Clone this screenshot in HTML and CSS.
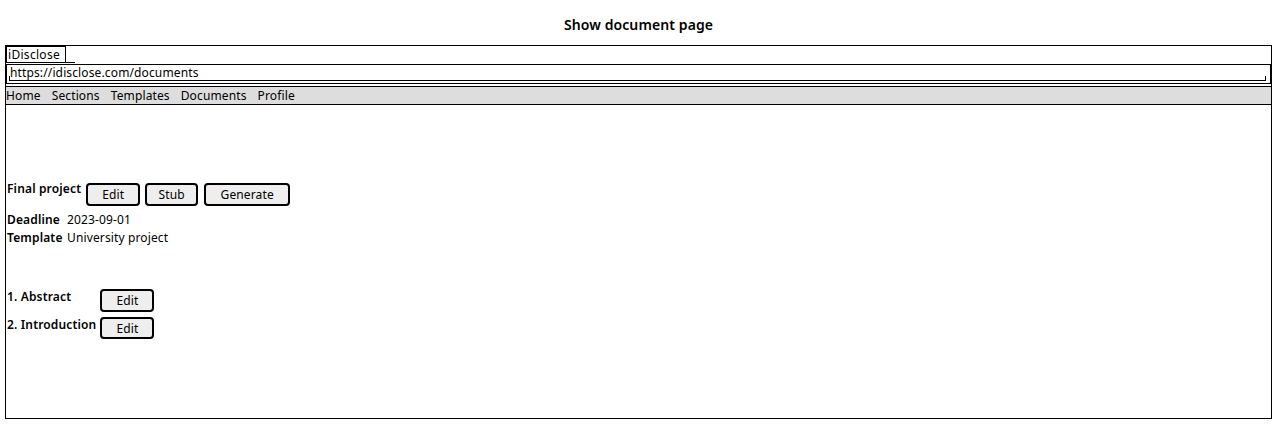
FILE: index.html
```html
<!DOCTYPE html>
<html>
<head>
<meta charset="utf-8">
<link rel="stylesheet" href="styles.css">
</head>
<body>
<div class="title">Show document page</div>
<div class="frame">
  <div class="tabs">
    <div class="tab">iDisclose</div>
    <div class="tab-rest"></div>
  </div>
  <div class="url">
    <div class="url-field">https://idisclose.com/documents</div>
  </div>
  <div class="menu">
    <span>Home</span>
    <span>Sections</span>
    <span>Templates</span>
    <span>Documents</span>
    <span>Profile</span>
  </div>
  <div class="content">
    <div class="head-row">
      <div class="label">Final project</div>
      <div class="btn btn-edit">Edit</div>
      <div class="btn btn-stub">Stub</div>
      <div class="btn btn-gen">Generate</div>
    </div>
    <div class="props">
      <div class="label">Deadline</div><div class="value">2023-09-01</div>
      <div class="label">Template</div><div class="value">University project</div>
    </div>
    <div class="sections">
      <div class="label sec-label">1. Abstract</div><div class="btn btn-edit">Edit</div>
      <div class="label sec-label">2. Introduction</div><div class="btn btn-edit">Edit</div>
    </div>
  </div>
</div>
</body>
</html>
```

FILE: styles.css
```css
html, body {
  margin: 0;
  padding: 0;
  background: #fff;
}
body {
  font-family: "Noto Sans", "DejaVu Sans", sans-serif;
  font-size: 12px;
  letter-spacing: 0.13px;
  color: #000;
}
.title {
  height: 45px;
  box-sizing: border-box;
  padding-top: 16px;
  line-height: 18px;
  font-size: 14px;
  font-weight: 600;
  letter-spacing: 0.1px;
  text-align: center;
}
.frame {
  margin-left: 5px;
  width: 1267px;
  height: 374px;
  border: 1px solid #000;
  box-sizing: border-box;
  display: flex;
  flex-direction: column;
}
.tabs {
  display: flex;
  align-items: flex-end;
  height: 17px;
}
.tab {
  height: 17px;
  box-sizing: border-box;
  border: 1px solid #000;
  padding: 0 5px 0 1px;
  line-height: 15px;
  letter-spacing: 0.3px;
}
.tab-rest {
  width: 9px;
  border-bottom: 1px solid #000;
}
.url {
  margin-top: 1px;
  height: 20px;
  box-sizing: border-box;
  border: 1px solid #000;
  padding: 0 4px 0 2px;
}
.url-field {
  position: relative;
  line-height: 16px;
  padding-left: 1px;
}
.url-field::after {
  content: "";
  position: absolute;
  left: 0;
  right: 0;
  top: 11px;
  height: 4px;
  border: 1px solid #000;
  border-top: none;
}
.menu {
  margin-top: 2px;
  height: 19px;
  box-sizing: border-box;
  border-top: 1px solid #000;
  border-bottom: 1px solid #000;
  background: #dddddd;
  display: flex;
  gap: 11px;
  line-height: 17px;
}
.content {
  padding-left: 1px;
}
.label {
  font-weight: 600;
  letter-spacing: 0.15px;
  line-height: 16px;
}
.head-row {
  margin-top: 76px;
  display: flex;
  align-items: flex-start;
  gap: 5px;
}
.btn {
  height: 23px;
  box-sizing: border-box;
  border: 2px solid #000;
  border-radius: 4px;
  background: #eeeeee;
  text-align: center;
  line-height: 19px;
}
.head-row .btn {
  margin-top: 2px;
}
.btn-edit { width: 54px; }
.btn-stub { width: 53px; }
.btn-gen { width: 86px; margin-left: 1px; }
.props {
  margin-top: 6px;
  display: grid;
  grid-template-columns: 60px auto;
  row-gap: 2px;
  justify-content: start;
  line-height: 16px;
}
.sections {
  margin-top: 43px;
  display: grid;
  grid-template-columns: auto 54px;
  column-gap: 4px;
  row-gap: 5px;
  justify-content: start;
}
.sections .btn:last-child {
  height: 22px;
}
```
